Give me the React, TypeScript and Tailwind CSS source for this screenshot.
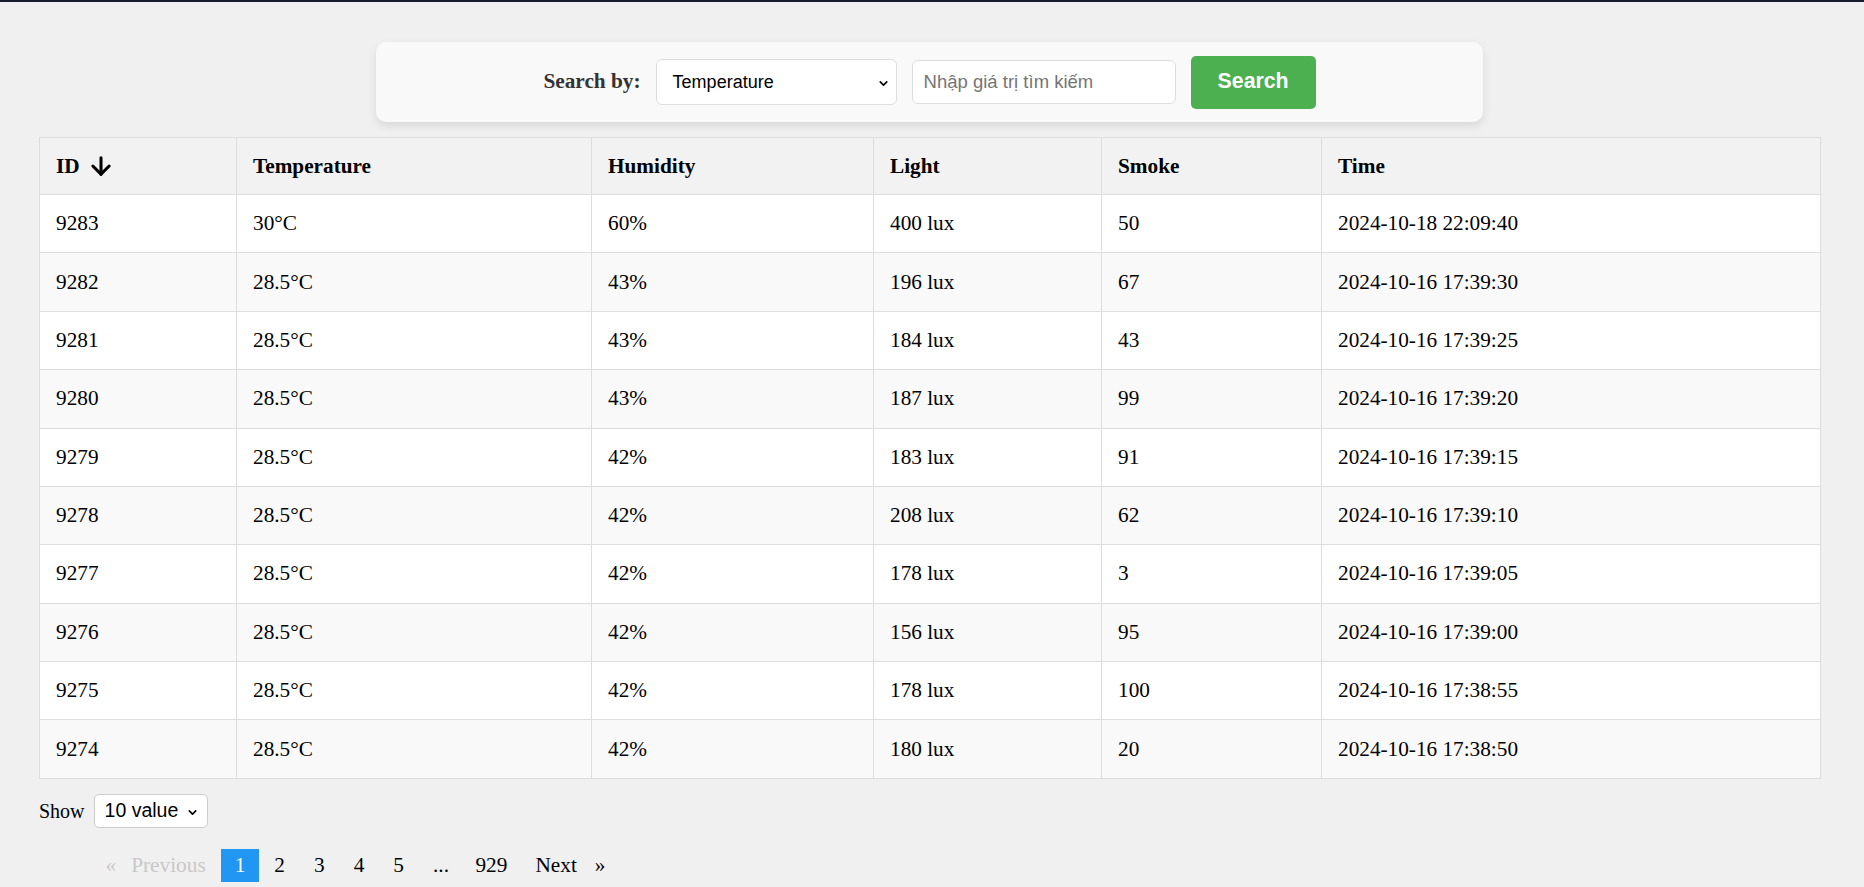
import { ArrowDown, ChevronDown } from "lucide-react";

const ROWS = [
  { id: 9283, temp: "30°C", hum: "60%", light: "400 lux", smoke: "50", time: "2024-10-18 22:09:40" },
  { id: 9282, temp: "28.5°C", hum: "43%", light: "196 lux", smoke: "67", time: "2024-10-16 17:39:30" },
  { id: 9281, temp: "28.5°C", hum: "43%", light: "184 lux", smoke: "43", time: "2024-10-16 17:39:25" },
  { id: 9280, temp: "28.5°C", hum: "43%", light: "187 lux", smoke: "99", time: "2024-10-16 17:39:20" },
  { id: 9279, temp: "28.5°C", hum: "42%", light: "183 lux", smoke: "91", time: "2024-10-16 17:39:15" },
  { id: 9278, temp: "28.5°C", hum: "42%", light: "208 lux", smoke: "62", time: "2024-10-16 17:39:10" },
  { id: 9277, temp: "28.5°C", hum: "42%", light: "178 lux", smoke: "3", time: "2024-10-16 17:39:05" },
  { id: 9276, temp: "28.5°C", hum: "42%", light: "156 lux", smoke: "95", time: "2024-10-16 17:39:00" },
  { id: 9275, temp: "28.5°C", hum: "42%", light: "178 lux", smoke: "100", time: "2024-10-16 17:38:55" },
  { id: 9274, temp: "28.5°C", hum: "42%", light: "180 lux", smoke: "20", time: "2024-10-16 17:38:50" },
];

const COLS = [197, 355, 282, 228, 220, 499];
const HEADERS = ["Temperature", "Humidity", "Light", "Smoke", "Time"];

const serif = "font-['Liberation_Serif',serif]";
const sans = "font-['Liberation_Sans',Arial,sans-serif]";

export default function App() {
  return (
    <div className={`min-h-[887px] bg-[#f0f0f0] ${serif} text-black`}>
      {/* top bar */}
      <div className="h-[2px] bg-[#1b1b2f]" />

      <div className="pl-[39px] pr-[44px] pt-[40px]">
        {/* SEARCH CARD */}
        <div className="mx-auto flex h-[80px] w-[1107px] items-center justify-center gap-[15px] rounded-[10px] bg-[#f9f9f9] shadow-[0_4px_10px_rgba(0,0,0,0.1)]">
          <span className="text-[21.3px] font-bold text-[#333]">Search by:</span>
          <div className={`relative flex h-[46px] w-[241px] items-center rounded-[6px] border border-[#ddd] bg-white pl-[16px] ${sans} text-[18px] text-black`}>
            Temperature
            <ChevronDown size={13} strokeWidth={3} className="absolute right-[6px] top-[17px]" />
          </div>
          <div className={`flex h-[44px] w-[264px] items-center rounded-[6px] border border-[#ddd] bg-white pl-[11px] ${sans} text-[18.5px] text-[#757575]`}>
            Nhập giá trị tìm kiếm
          </div>
          <button className={`h-[53px] w-[125px] rounded-[5px] bg-[#4caf50] ${sans} text-[21.3px] font-bold text-white`}>
            Search
          </button>
        </div>

        {/* TABLE */}
        <table className="mt-[15px] w-[1781px] table-fixed border-collapse text-[21.25px]">
          <colgroup>
            {COLS.map((w, i) => (
              <col key={i} style={{ width: w }} />
            ))}
          </colgroup>
          <thead>
            <tr className="bg-[#f2f2f2]">
              <th className="border border-[#ddd] px-[16px] py-[15.5px] text-left leading-[25px] font-bold">
                <span className="flex h-[25px] items-center gap-[7px]">
                  ID
                  <ArrowDown size={28} strokeWidth={2.6} className="-my-[2px]" />
                </span>
              </th>
              {HEADERS.map((h) => (
                <th key={h} className="border border-[#ddd] px-[16px] py-[15.5px] text-left leading-[25px] font-bold">
                  {h}
                </th>
              ))}
            </tr>
          </thead>
          <tbody>
            {ROWS.map((r, i) => (
              <tr key={r.id} className={i % 2 === 0 ? "bg-white" : "bg-[#f9f9f9]"}>
                {[r.id, r.temp, r.hum, r.light, r.smoke, r.time].map((v, j) => (
                  <td key={j} className="border border-[#ddd] px-[16px] py-[16.2px] leading-[25px]">
                    {v}
                  </td>
                ))}
              </tr>
            ))}
          </tbody>
        </table>

        {/* SHOW */}
        <div className="mt-[15px] flex items-center gap-[9px]">
          <span className="text-[20px]">Show</span>
          <div className={`relative flex h-[34px] w-[114px] items-center rounded-[5px] border border-[#ccc] bg-white pl-[10px] ${sans} text-[19.5px] text-black`}>
            10 value
            <ChevronDown size={13} strokeWidth={3} className="absolute right-[8px] top-[11px]" />
          </div>
        </div>

        {/* PAGINATION */}
        <div className="ml-[53px] mt-[21px] flex items-center gap-[2px] text-[21.3px] leading-[25px]">
          <span className="flex px-[13.5px] py-[4px] text-[#c8c8c8]">
            <span>«</span>
            <span className="ml-[15px]">Previous</span>
          </span>
          <span className="bg-[#2196f3] px-[13.5px] py-[4px] text-white">1</span>
          {["2", "3", "4", "5", "..."].map((p) => (
            <span key={p} className="px-[13.5px] py-[4px]">
              {p}
            </span>
          ))}
          <span className="pl-[11px] pr-[13.5px] py-[4px]">929</span>
          <span className="flex pl-[12.5px] pr-[13.5px] py-[4px]">
            <span>Next</span>
            <span className="ml-[18px]">»</span>
          </span>
        </div>
      </div>
    </div>
  );
}
